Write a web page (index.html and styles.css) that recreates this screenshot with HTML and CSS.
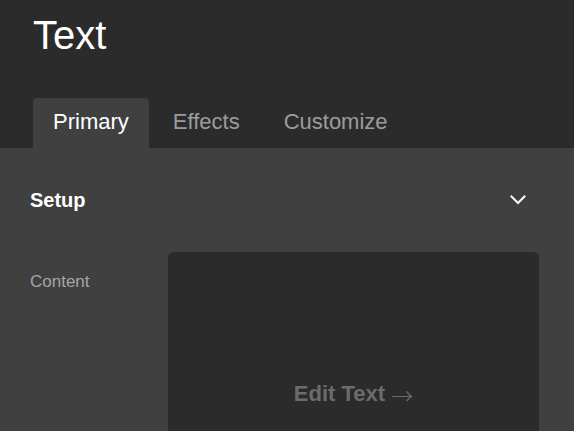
FILE: index.html
```html
<!DOCTYPE html>
<html>
<head>
<meta charset="utf-8">
<link rel="stylesheet" href="styles.css">
</head>
<body>
<header class="header">
  <h1 class="title">Text</h1>
  <nav class="tabs">
    <div class="tab active">Primary</div>
    <div class="tab">Effects</div>
    <div class="tab">Customize</div>
  </nav>
</header>
<main class="panel">
  <div class="section-head">
    <span class="section-title">Setup</span>
    <svg class="chevron" width="16" height="10" viewBox="0 0 16 10"><polyline points="1.5,1.5 8,8 14.5,1.5" fill="none" stroke="#fff" stroke-width="2" stroke-linecap="square"/></svg>
  </div>
  <div class="field">
    <div class="label">Content</div>
    <div class="editor"><span class="edit-link">Edit Text <span class="arrow">→</span></span></div>
  </div>
</main>
</body>
</html>
```
FILE: styles.css
```css
html, body {
  margin: 0;
  padding: 0;
  background: #404040;
  font-family: "Liberation Sans", Arial, sans-serif;
  overflow: hidden;
}
.header {
  background: #2b2b2b;
  height: 148px;
  padding: 0 33px;
  display: flex;
  flex-direction: column;
  box-sizing: border-box;
}
.title {
  margin: 12px 0 0 0;
  font-size: 40px;
  line-height: 46px;
  font-weight: normal;
  color: #ffffff;
}
.tabs {
  margin-top: auto;
  display: flex;
  gap: 4px;
}
.tab {
  height: 50px;
  box-sizing: border-box;
  padding: 0 20px;
  font-size: 22px;
  line-height: 47px;
  color: #9c9c9c;
  border-radius: 4px 4px 0 0;
}
.tab.active {
  background: #404040;
  color: #ffffff;
}
.panel {
  padding: 40px 35px 0 30px;
}
.section-head {
  display: flex;
  justify-content: space-between;
  align-items: center;
  height: 24px;
  padding-right: 13px;
}
.section-title {
  font-size: 20px;
  line-height: 24px;
  font-weight: bold;
  color: #ffffff;
}
.chevron {
  display: block;
}
.field {
  margin-top: 40px;
  display: flex;
}
.label {
  flex: 0 0 138px;
  margin-top: 20px;
  font-size: 17px;
  line-height: 20px;
  color: #a6a6a6;
}
.editor {
  flex: 0 0 371px;
  height: 300px;
  background: #2b2b2b;
  border-radius: 6px;
  box-sizing: border-box;
  padding-top: 129px;
  text-align: center;
}
.edit-link {
  font-size: 22px;
  line-height: 26px;
  font-weight: bold;
  color: #6b6b6b;
}
.arrow {
  font-family: "Noto Sans CJK SC", sans-serif;
  font-size: 22px;
  line-height: 0;
  font-weight: 300;
  vertical-align: -3px;
}
```
